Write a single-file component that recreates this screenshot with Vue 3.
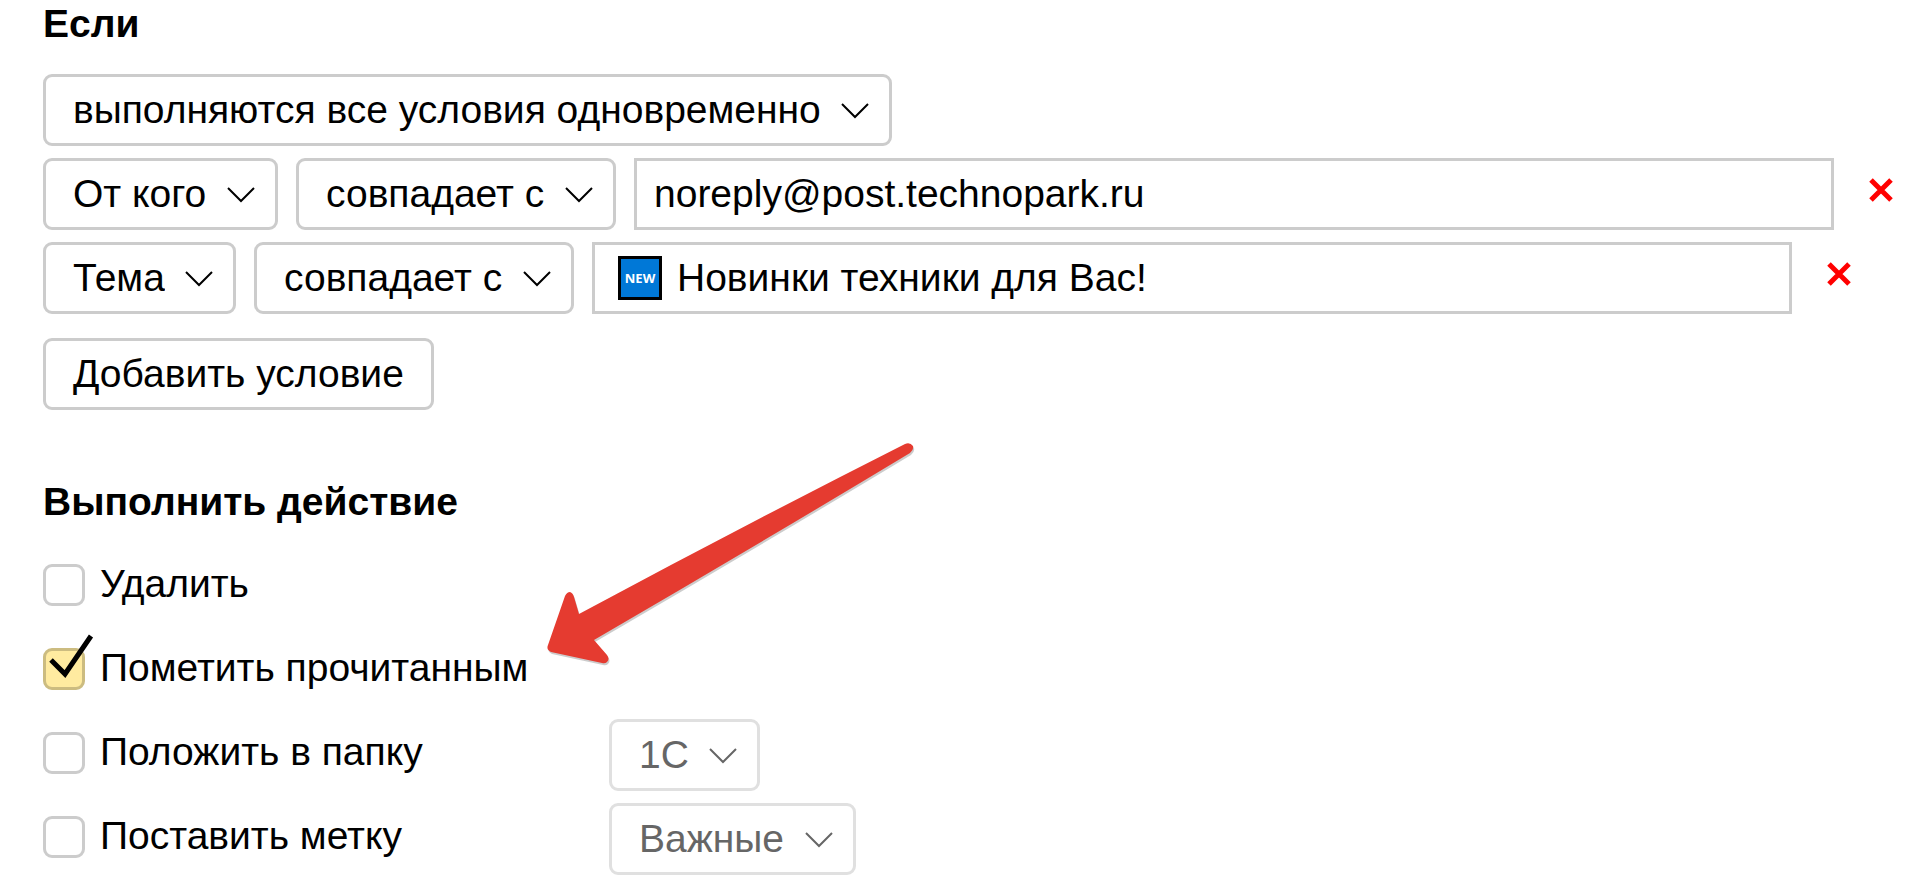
<template>
  <main class="filter-page">
    <form class="filter-form" @submit.prevent>
      <h2 class="section-title">Если</h2>

      <div class="conditions">
        <div class="condition-row">
          <div class="select-box">
            <select v-model="logic" aria-label="Логика условий">
              <option>выполняются все условия одновременно</option>
            </select>
            <svg class="chevron" viewBox="0 0 28 16"><path d="M1 1 L14 14 L27 1" /></svg>
          </div>
        </div>

        <div v-for="item in conditions" :key="item.id" class="condition-row">
          <div class="select-box">
            <select v-model="item.field" aria-label="Поле письма">
              <option>{{ item.field }}</option>
            </select>
            <svg class="chevron" viewBox="0 0 28 16"><path d="M1 1 L14 14 L27 1" /></svg>
          </div>
          <div class="select-box">
            <select v-model="item.match" aria-label="Сравнение">
              <option>{{ item.match }}</option>
            </select>
            <svg class="chevron" viewBox="0 0 28 16"><path d="M1 1 L14 14 L27 1" /></svg>
          </div>
          <div class="text-box">
            <span v-if="item.badge" class="new-badge">{{ item.badge }}</span>
            <input v-model="item.value" type="text" aria-label="Значение" spellcheck="false" />
          </div>
          <button type="button" class="remove-btn" aria-label="Удалить условие" @click="removeCondition(item.id)">
            <svg viewBox="0 0 24 24"><path d="M2 2 L22 22 M22 2 L2 22" /></svg>
          </button>
        </div>
      </div>

      <button type="button" class="add-btn" @click="addCondition">Добавить условие</button>

      <h2 class="section-title actions-title">Выполнить действие</h2>

      <div class="actions">
        <div v-for="action in actions" :key="action.id" class="action-row">
          <label class="action-label">
            <span class="check">
              <input v-model="action.checked" type="checkbox" />
              <svg v-if="action.checked" class="tick" viewBox="0 0 42 42">
                <path d="M8 12 L22 26 L48 -12" />
              </svg>
            </span>
            <span class="action-text">{{ action.label }}</span>
          </label>
          <div v-if="action.option" class="select-box" :class="{ disabled: !action.checked }">
            <select v-model="action.option" :disabled="!action.checked" :aria-label="action.label">
              <option>{{ action.option }}</option>
            </select>
            <svg class="chevron" viewBox="0 0 28 16"><path d="M1 1 L14 14 L27 1" /></svg>
          </div>
        </div>
      </div>
    </form>

    <svg class="pointer" viewBox="0 0 380 230" aria-hidden="true">
      <path
        d="M365 4 Q370 2 373 6 Q374 10 370 13 Q214 107 54 200 L67 215 Q70 219 67 222 Q65 224 62 223
           L11 212 Q6 210 8 205 L25 156 Q27 152 30 152 Q33 153 34 157 L39 174 Q201 87 365 4 Z"
      />
    </svg>
  </main>
</template>

<script setup>
import { reactive, ref } from 'vue'

const logic = ref('выполняются все условия одновременно')

const conditions = ref([
  { id: 1, field: 'От кого', match: 'совпадает с', value: 'noreply@post.technopark.ru', badge: '' },
  { id: 2, field: 'Тема', match: 'совпадает с', value: 'Новинки техники для Вас!', badge: 'NEW' },
])

const actions = reactive([
  { id: 'delete', label: 'Удалить', checked: false },
  { id: 'read', label: 'Пометить прочитанным', checked: true },
  { id: 'folder', label: 'Положить в папку', checked: false, option: '1C' },
  { id: 'mark', label: 'Поставить метку', checked: false, option: 'Важные' },
])

let nextId = 3

function addCondition() {
  conditions.value.push({ id: nextId++, field: 'От кого', match: 'совпадает с', value: '', badge: '' })
}

function removeCondition(id) {
  conditions.value = conditions.value.filter((item) => item.id !== id)
}
</script>

<style>
body {
  margin: 0;
  background: #fff;
}
</style>

<style scoped>
.filter-page {
  position: relative;
  padding: 0 25px 8px 43px;
  font-family: 'Liberation Sans', Arial, sans-serif;
  font-size: 39px;
  line-height: 48px;
  color: #000;
}

.section-title {
  margin: 0 0 26px;
  font-size: 39px;
  font-weight: 700;
}

.conditions {
  display: flex;
  flex-direction: column;
  gap: 12px;
}

.condition-row {
  display: flex;
  align-items: center;
  gap: 18px;
}

.select-box {
  display: inline-grid;
  flex-shrink: 0;
  align-items: center;
}

.select-box select,
.chevron {
  grid-area: 1 / 1;
}

.select-box select {
  appearance: none;
  box-sizing: border-box;
  height: 72px;
  margin: 0;
  padding: 0 68px 0 27px;
  border: 3px solid #ccc;
  border-radius: 9px;
  background: #fff;
  font: inherit;
  color: #000;
  cursor: pointer;
}

.chevron {
  justify-self: end;
  width: 28px;
  height: 16px;
  margin: 2px 23px 0 0;
  fill: none;
  stroke: #000;
  stroke-width: 2;
  pointer-events: none;
}

.select-box.disabled select {
  border-color: #e0e0e0;
  color: #666;
  opacity: 1;
  cursor: default;
}

.select-box.disabled .chevron {
  stroke: #666;
}

.text-box {
  display: flex;
  flex: 0 1 1200px;
  align-items: center;
  box-sizing: border-box;
  min-width: 0;
  height: 72px;
  padding: 0 17px;
  border: 3px solid #ccc;
  background: #fff;
}

.text-box input {
  flex: 1;
  min-width: 0;
  height: 60px;
  margin: 0;
  padding: 0;
  border: 0;
  outline: 0;
  background: none;
  font: inherit;
  color: #000;
}

.new-badge {
  display: flex;
  flex-shrink: 0;
  align-items: center;
  justify-content: center;
  box-sizing: border-box;
  width: 44px;
  height: 44px;
  margin: 0 15px 0 6px;
  border: 3px solid #000;
  background: #0078d7;
  font-family: 'Open Sans', sans-serif;
  font-size: 13px;
  font-weight: 700;
  line-height: 16px;
  color: #fff;
}

.remove-btn {
  flex-shrink: 0;
  width: 24px;
  height: 24px;
  margin: 0 0 8px 17px;
  padding: 0;
  border: 0;
  background: none;
  cursor: pointer;
}

.remove-btn svg {
  display: block;
  width: 24px;
  height: 24px;
  fill: none;
  stroke: #f00;
  stroke-width: 5;
}

.add-btn {
  display: block;
  box-sizing: border-box;
  height: 72px;
  margin: 24px 0 0;
  padding: 0 27px;
  border: 3px solid #ccc;
  border-radius: 9px;
  background: #fff;
  font: inherit;
  color: #000;
  cursor: pointer;
}

.actions-title {
  margin: 68px 0 23px;
}

.actions {
  display: flex;
  flex-direction: column;
  gap: 12px;
}

.action-row {
  display: grid;
  grid-template-columns: 566px auto;
  grid-template-rows: 72px;
  align-items: center;
  justify-content: start;
}

.action-row .select-box {
  margin-top: 4px;
}

.action-label {
  display: flex;
  align-items: center;
  justify-self: start;
  gap: 15px;
  cursor: pointer;
}

.action-text {
  padding-bottom: 2px;
}

.check {
  position: relative;
  display: block;
  width: 42px;
  height: 42px;
}

.check input {
  appearance: none;
  display: block;
  box-sizing: border-box;
  width: 42px;
  height: 42px;
  margin: 0;
  border: 3px solid #ccc;
  border-radius: 9px;
  background: #fff;
  cursor: pointer;
}

.check input:checked {
  border-color: #ccbc80;
  background: #ffeba0;
}

.tick {
  position: absolute;
  inset: 0;
  overflow: visible;
  fill: none;
  stroke: #000;
  stroke-width: 5;
  pointer-events: none;
}

.pointer {
  position: absolute;
  top: 440px;
  left: 540px;
  width: 380px;
  height: 230px;
  fill: #e53b30;
  filter: drop-shadow(1px 2px 0 rgba(0, 0, 0, 0.2));
  pointer-events: none;
}
</style>
